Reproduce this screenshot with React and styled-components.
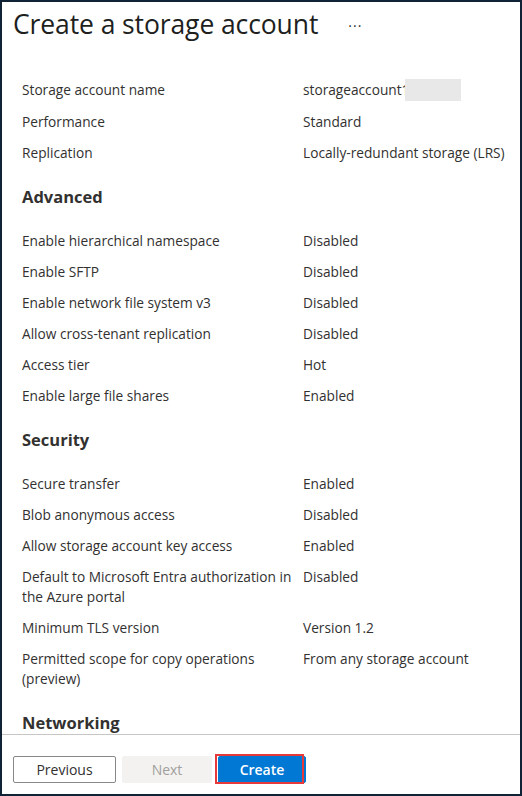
import React from "react";
import styled, { createGlobalStyle } from "styled-components";

const GlobalStyle = createGlobalStyle`
  html, body {
    margin: 0;
    padding: 0;
    background: #ffffff;
  }
  * {
    box-sizing: border-box;
  }
`;

const Frame = styled.div`
  width: 522px;
  height: 796px;
  border: 2px solid #0f2236;
  display: flex;
  flex-direction: column;
  font-family: "Open Sans", "Noto Sans", sans-serif;
  color: #323130;
  background: #fff;
  overflow: hidden;
`;

const Header = styled.header`
  display: flex;
  align-items: center;
  padding: 3px 0 0 11px;
  height: 41px;
`;

const Title = styled.h1`
  margin: 0;
  font-size: 26.5px;
  font-weight: 400;
  line-height: 36px;
  color: #201f1e;
  letter-spacing: -0.1px;
`;

const More = styled.span`
  margin-left: 30px;
  margin-top: 2px;
  font-size: 14px;
  color: #323130;
  letter-spacing: 1px;
`;

const Body = styled.main`
  flex: 1;
  overflow: hidden;
  padding: 37px 12px 0 20px;
`;

const Section = styled.section`
  & + & {
    margin-top: 22px;
  }
`;

const Heading = styled.h2`
  margin: 0 0 22px;
  font-size: 16.5px;
  font-weight: 700;
  line-height: 24px;
  color: #323130;
`;

const Grid = styled.dl`
  margin: 0;
  display: grid;
  grid-template-columns: 273px 1fr;
  column-gap: 8px;
  row-gap: 11px;
  font-size: 13.7px;
  line-height: 20px;
`;

const Label = styled.dt`
  margin: 0;
`;

const Value = styled.dd`
  margin: 0;
  white-space: nowrap;
`;

const Redacted = styled.span`
  display: inline-block;
  vertical-align: middle;
  width: 56px;
  height: 22px;
  margin-left: -4px;
  margin-top: -3px;
  background: #e8e8e8;
`;

const Footer = styled.footer`
  border-top: 1px solid #c8c6c4;
  height: 60px;
  display: flex;
  align-items: flex-start;
  gap: 6px;
  padding: 21px 0 0 11px;
`;

const Button = styled.button`
  height: 27px;
  width: ${(p) => p.$w}px;
  border-radius: 2px;
  font-family: "Open Sans", "Noto Sans", sans-serif;
  font-size: 14px;
  font-weight: ${(p) => (p.$primary ? 600 : 400)};
  padding: 0;
  cursor: pointer;
  border: 1px solid
    ${(p) => (p.$primary ? "#0078d4" : p.disabled ? "#f3f2f1" : "#8a8886")};
  background: ${(p) =>
    p.$primary ? "#0078d4" : p.disabled ? "#f3f2f1" : "#ffffff"};
  color: ${(p) => (p.$primary ? "#ffffff" : p.disabled ? "#a19f9d" : "#323130")};
`;

const Highlight = styled.div`
  position: relative;
  display: inline-flex;

  &::after {
    content: "";
    position: absolute;
    left: -3px;
    top: -2px;
    right: 2px;
    bottom: -1px;
    border: 2px solid #e8393a;
    pointer-events: none;
  }
`;

const sections = [
  {
    rows: [
      ["Storage account name", "storageaccount1"],
      ["Performance", "Standard"],
      ["Replication", "Locally-redundant storage (LRS)"],
    ],
  },
  {
    title: "Advanced",
    rows: [
      ["Enable hierarchical namespace", "Disabled"],
      ["Enable SFTP", "Disabled"],
      ["Enable network file system v3", "Disabled"],
      ["Allow cross-tenant replication", "Disabled"],
      ["Access tier", "Hot"],
      ["Enable large file shares", "Enabled"],
    ],
  },
  {
    title: "Security",
    rows: [
      ["Secure transfer", "Enabled"],
      ["Blob anonymous access", "Disabled"],
      ["Allow storage account key access", "Enabled"],
      [
        "Default to Microsoft Entra authorization in the Azure portal",
        "Disabled",
      ],
      ["Minimum TLS version", "Version 1.2"],
      ["Permitted scope for copy operations (preview)", "From any storage account"],
    ],
  },
  { title: "Networking", rows: [] },
];

export default function App() {
  return (
    <>
      <GlobalStyle />
      <Frame>
        <Header>
          <Title>Create a storage account</Title>
          <More>···</More>
        </Header>
        <Body>
          {sections.map((s, i) => (
            <Section key={i}>
              {s.title && <Heading>{s.title}</Heading>}
              {s.rows.length > 0 && (
                <Grid>
                  {s.rows.map(([label, value]) => (
                    <React.Fragment key={label}>
                      <Label>{label}</Label>
                      <Value>
                        {value}
                        {label === "Storage account name" && <Redacted />}
                      </Value>
                    </React.Fragment>
                  ))}
                </Grid>
              )}
            </Section>
          ))}
        </Body>
        <Footer>
          <Button $w={103}>Previous</Button>
          <Button $w={90} disabled>
            Next
          </Button>
          <Highlight>
            <Button $w={88} $primary>
              Create
            </Button>
          </Highlight>
        </Footer>
      </Frame>
    </>
  );
}
